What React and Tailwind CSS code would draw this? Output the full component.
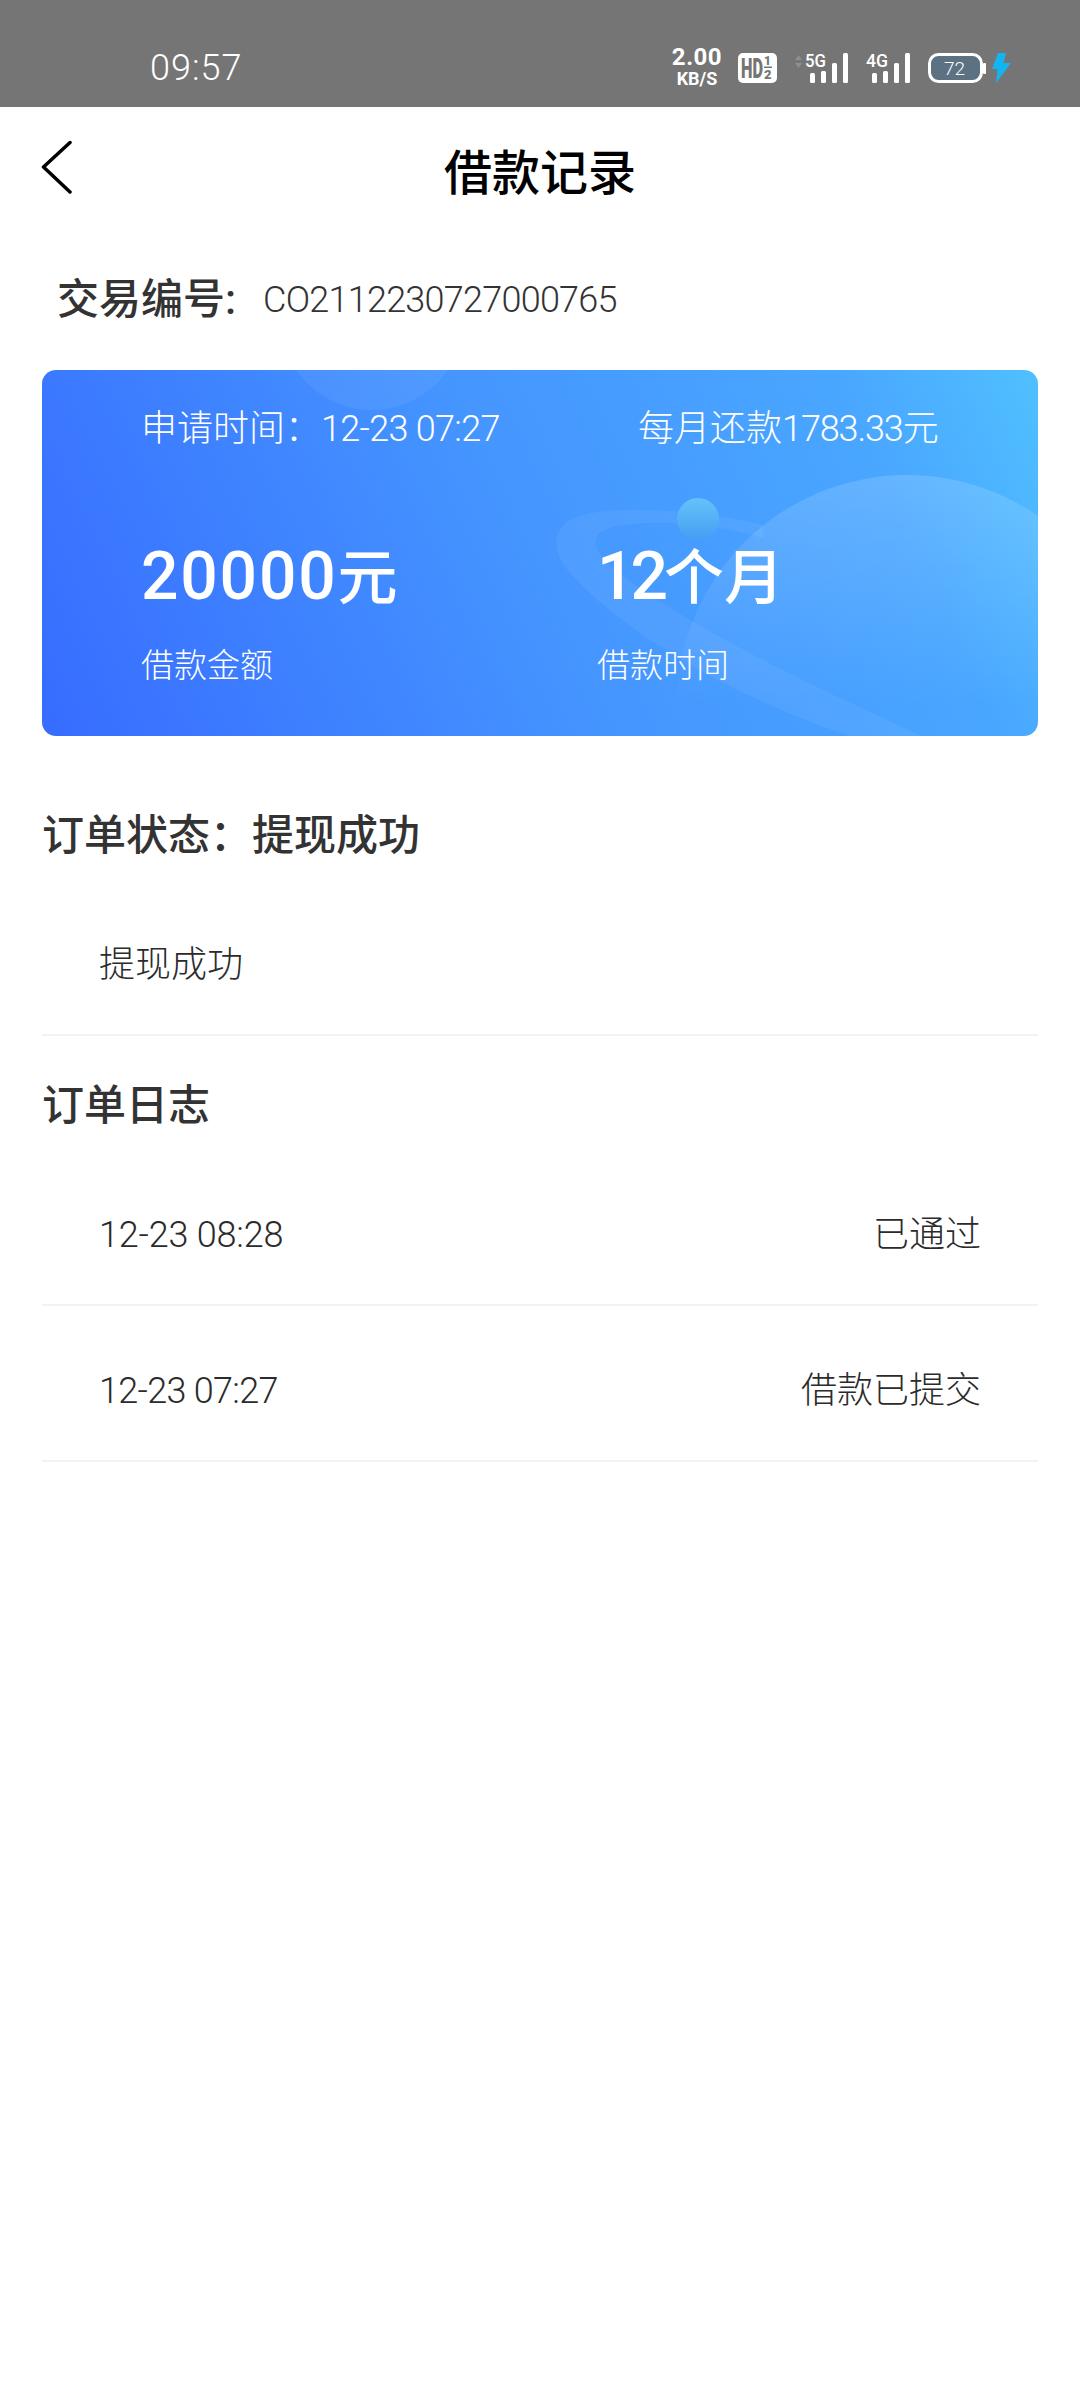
const BASE = { fontFamily: '"Roboto","Noto Sans CJK SC",sans-serif' };

function StatusIcons() {
  return (
    <div className="flex items-center">
      <div className="flex flex-col items-center w-[50px] mr-[16px] text-white font-bold">
        <span className="text-[24px] leading-[22px] tracking-[0.5px]">2.00</span>
        <span className="text-[18px] leading-[22px]">KB/S</span>
      </div>
      <svg width="39" height="32" viewBox="0 0 39 32" className="mr-[16px] overflow-visible">
        <rect x="0" y="1" width="39" height="30" rx="5" fill="#fff" />
        <text x="3" y="26" fontSize="28" fontWeight="900" fill="#757575" fontFamily="Roboto" textLength="22" lengthAdjust="spacingAndGlyphs">HD</text>
        <text x="26" y="13" fontSize="12" fontWeight="900" fill="#757575" fontFamily="Roboto">1</text>
        <rect x="26" y="14.5" width="8" height="1.5" fill="#757575" />
        <text x="26" y="27" fontSize="13" fontWeight="900" fill="#757575" fontFamily="Roboto">2</text>
      </svg>
      <svg width="55" height="32" viewBox="0 0 55 32" className="mr-[18px] overflow-visible">
        <path d="M2 8l3.5-5 3.5 5zM2 11l3.5 5 3.5-5z" fill="#8f8f8f" />
        <text x="12" y="15" fontSize="18" fontWeight="500" fill="#fff" fontFamily="Roboto" textLength="21" lengthAdjust="spacingAndGlyphs">5G</text>
        <rect x="17" y="21" width="5" height="10" rx="1.5" fill="#fff" />
        <rect x="28" y="19" width="5" height="12" rx="1.5" fill="#fff" />
        <rect x="39" y="11" width="5" height="20" rx="1.5" fill="#fff" />
        <rect x="50" y="1" width="5" height="30" rx="1.5" fill="#fff" />
      </svg>
      <svg width="44" height="32" viewBox="0 0 44 32" className="mr-[18px] overflow-visible">
        <text x="0" y="15" fontSize="18" fontWeight="500" fill="#fff" fontFamily="Roboto" textLength="22" lengthAdjust="spacingAndGlyphs">4G</text>
        <rect x="6" y="21" width="5" height="10" rx="1.5" fill="#fff" />
        <rect x="17" y="19" width="5" height="12" rx="1.5" fill="#fff" />
        <rect x="28" y="11" width="5" height="20" rx="1.5" fill="#fff" />
        <rect x="39" y="1" width="5" height="30" rx="1.5" fill="#fff" />
      </svg>
      <svg width="84" height="32" viewBox="0 0 84 32">
        <rect x="1.5" y="2.5" width="52" height="27" rx="9" fill="#5c7182" stroke="#fff" strokeWidth="3" />
        <text x="16" y="23" fontSize="19" fill="#fff" fontFamily="Roboto" fontWeight="300">72</text>
        <rect x="55" y="11" width="3" height="11" rx="1" fill="#fff" />
        <path d="M70 1 L64 17 H69.5 L68 31 L83 11 H75.5 L78 1 Z" fill="#12b5f0" />
      </svg>
    </div>
  );
}

function CardArt() {
  return (
    <svg className="absolute inset-0 w-full h-full" viewBox="0 0 996 366" fill="none">
      <defs>
        <linearGradient id="fadeTop" x1="0" y1="0" x2="0" y2="1">
          <stop offset="0" stopColor="#fff" stopOpacity="0.03" />
          <stop offset="1" stopColor="#fff" stopOpacity="0.06" />
        </linearGradient>
        <linearGradient id="fadeBig" x1="0" y1="0" x2="0" y2="1">
          <stop offset="0" stopColor="#fff" stopOpacity="0.15" />
          <stop offset="0.5" stopColor="#fff" stopOpacity="0" />
        </linearGradient>
        <linearGradient id="ball" x1="0" y1="0" x2="0" y2="1">
          <stop offset="0" stopColor="#66c2f9" />
          <stop offset="1" stopColor="#459ef3" />
        </linearGradient>
      </defs>
      <circle cx="330" cy="-52" r="92" fill="url(#fadeTop)" />
      <circle cx="865" cy="335" r="230" fill="url(#fadeBig)" />
      <path
        d="M721 155 C660 140 580 135 540 145 C505 155 510 185 530 205 C590 270 700 330 808 366 L880 366 C780 320 660 265 580 205 C548 180 545 165 570 157 C610 148 680 155 721 168 Z"
        fill="#fff"
        fillOpacity="0.06"
      />
      <circle cx="656" cy="149" r="21" fill="url(#ball)" />
    </svg>
  );
}

function LogRow({ left, right, leftClass = "" }) {
  return (
    <div className="mx-[42px] h-[156px] pt-[16px] flex items-center justify-between px-[57px] border-b-2 border-[#f2f2f2] text-[36px] text-[#2b2b2b] font-light">
      <span className={leftClass}>{left}</span>
      {right && <span>{right}</span>}
    </div>
  );
}

export default function App() {
  return (
    <div className="w-[1080px] h-[2400px] bg-white overflow-hidden" style={BASE}>
      <div className="h-[107px] bg-[#757575] pt-[33px] pb-[4px] flex items-center justify-between pl-[150px] pr-[68px]">
        <span className="text-[36px] text-white font-light tracking-[1px]">09:57</span>
        <StatusIcons />
      </div>

      <div className="relative h-[120px] pt-[14px] flex items-center justify-center">
        <svg width="33" height="54" viewBox="0 0 33 54" className="absolute left-[40px] top-[33px]" fill="none" stroke="#000" strokeWidth="3.5" strokeLinecap="round" strokeLinejoin="round">
          <path d="M30 2.5 L3.5 27 L30 52" />
        </svg>
        <span className="text-[48px] font-medium text-black">借款记录</span>
      </div>

      <div className="h-[143px] pt-[2px] pl-[57px] flex items-center text-[#333]">
        <span className="text-[42px] font-medium w-[206px]">交易编号:</span>
        <span className="text-[36px] font-light tracking-[-0.75px]">CO2112230727000765</span>
      </div>

      <div className="relative mx-[42px] h-[366px] rounded-[14px] overflow-hidden bg-[linear-gradient(65deg,#376cff_0%,#4596ff_50%,#49a6ff_82%,#50c0ff_100%)] text-white">
        <CardArt />
        <div className="relative pt-[36px] pl-[99px] flex text-[36px] font-light leading-[46px]">
          <span className="w-[497px]">申请时间：<span className="tracking-[-0.7px]">12-23 07:27</span></span>
          <span>每月还款<span className="tracking-[-1.1px]">1783.33</span>元</span>
        </div>
        <div className="relative mt-[85px] pl-[99px] grid grid-cols-[456px_1fr]">
          <div>
            <div className="font-medium leading-[80px] text-[60px]"><span className="text-[66px] tracking-[1.8px]">20000</span>元</div>
            <div className="mt-[24px] text-[33px] font-light leading-[46px]">借款金额</div>
          </div>
          <div>
            <div className="font-medium leading-[80px] text-[60px]"><span className="text-[66px] tracking-[-4px]">12</span>个月</div>
            <div className="mt-[24px] text-[33px] font-light leading-[46px]">借款时间</div>
          </div>
        </div>
      </div>

      <div className="h-[144px] pt-[70px] pl-[42px] text-[42px] font-medium text-[#333] leading-[60px]">订单状态：提现成功</div>
      <LogRow left="提现成功" />
      <div className="h-[114px] pt-[40px] pl-[42px] text-[42px] font-medium text-[#333] leading-[60px]">订单日志</div>
      <LogRow left="12-23 08:28" right="已通过" leftClass="tracking-[-0.2px]" />
      <LogRow left="12-23 07:27" right="借款已提交" leftClass="tracking-[-0.7px]" />
    </div>
  );
}
